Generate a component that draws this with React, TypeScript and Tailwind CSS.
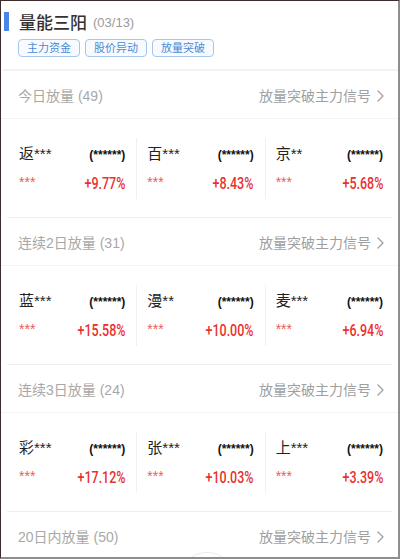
import React from "react";

type Stock = { name: string; change: string };

type Section = { title: string; count: number; stocks: Stock[] };

const sections: Section[] = [
  {
    title: "今日放量",
    count: 49,
    stocks: [
      { name: "返***", change: "+9.77%" },
      { name: "百***", change: "+8.43%" },
      { name: "京**", change: "+5.68%" },
    ],
  },
  {
    title: "连续2日放量",
    count: 31,
    stocks: [
      { name: "蓝***", change: "+15.58%" },
      { name: "漫**", change: "+10.00%" },
      { name: "麦***", change: "+6.94%" },
    ],
  },
  {
    title: "连续3日放量",
    count: 24,
    stocks: [
      { name: "彩***", change: "+17.12%" },
      { name: "张***", change: "+10.03%" },
      { name: "上***", change: "+3.39%" },
    ],
  },
  { title: "20日内放量", count: 50, stocks: [] },
];

const tags = ["主力资金", "股价异动", "放量突破"];

const FONT = {
  fontFamily: '"Liberation Sans", "Noto Sans CJK SC", sans-serif',
};

function Chevron() {
  return (
    <svg width="7" height="12" viewBox="0 0 7 12" className="ml-[6px]">
      <polyline
        points="1,1 6,6 1,11"
        fill="none"
        stroke="#a0a0a0"
        strokeWidth="1.3"
        strokeLinecap="round"
        strokeLinejoin="round"
      />
    </svg>
  );
}

function SectionHeader({ title, count }: { title: string; count: number }) {
  return (
    <div className="flex h-[48px] items-center justify-between border-b border-[#f4f4f4] pl-[17px] pr-[14px] pt-[3px]">
      <span className="text-[14px] text-[#a8a8a8]">
        {title} ({count})
      </span>
      <span className="flex items-center text-[14px] text-[#a0a0a0]">
        放量突破主力信号
        <Chevron />
      </span>
    </div>
  );
}

function StockCell({ stock, last }: { stock: Stock; last: boolean }) {
  return (
    <div
      className={`flex h-[61px] flex-col pt-[7px] pl-[10px] pr-[11px] ${
        last ? "" : "border-r border-[#f0f0f0]"
      }`}
    >
      <div className="flex h-[18px] items-end justify-between">
        <span className="text-[15px] leading-[18px] text-[#222]">{stock.name}</span>
        <span className="text-[12px] font-bold leading-[16px] text-[#111]">(******)</span>
      </div>
      <div className="mt-[12px] flex h-[18px] items-center justify-between">
        <span className="self-start text-[14px] leading-[14px] text-[#f05a5a]">***</span>
        <span
          className="inline-block origin-right scale-x-[0.78] text-[16px] font-medium leading-[18px] text-[#e8302e]"
          style={{ fontFamily: "Roboto, sans-serif" }}
        >
          {stock.change}
        </span>
      </div>
    </div>
  );
}

export default function App() {
  return (
    <div
      className="relative h-[559px] w-[400px] overflow-hidden border-l border-t border-l-[#3e2c2c] border-t-[#3e2c2c] border-r-2 border-b-2 border-r-[#8e8e8e] border-b-[#8e8e8e] bg-white"
      style={FONT}
    >
      <div className="pt-[11px] pb-[12px]">
        <div className="flex h-[19px] items-center pl-[3px]">
          <div className="h-[19px] w-[5px] bg-[#4a86e8]" />
          <span
            className="ml-[10px] text-[17px] font-medium text-[#333]"
            style={{ fontFamily: '"Noto Sans CJK SC", sans-serif' }}
          >
            量能三阳
          </span>
          <span className="ml-[6px] mt-[2px] text-[13px] text-[#9a9a9a]">(03/13)</span>
        </div>
        <div className="mt-[8px] flex gap-[5px] pl-[17px]">
          {tags.map((t) => (
            <span
              key={t}
              className="flex h-[18px] items-center rounded-[4px] border border-[#a6c7ec] bg-[#f7fbff] px-[8px] text-[11px] text-[#4d8ad6]"
            >
              {t}
            </span>
          ))}
        </div>
      </div>
      <div className="ml-[2px] h-[2px] bg-[#f2f2f2]" />

      {sections.map((s, i) => (
        <div key={s.title}>
          <SectionHeader title={s.title} count={s.count} />
          {s.stocks.length > 0 && (
            <>
              <div className="ml-[8px] mr-[4px] grid h-[98px] grid-cols-3 items-center">
                {s.stocks.map((st, j) => (
                  <StockCell key={st.name} stock={st} last={j === s.stocks.length - 1} />
                ))}
              </div>
              {i < sections.length - 1 && <div className="mx-[6px] h-px bg-[#efefef]" />}
            </>
          )}
        </div>
      ))}

      <div className="absolute left-[176px] top-[551px] h-[60px] w-[60px] rounded-full border border-[#ececec]" />
    </div>
  );
}
